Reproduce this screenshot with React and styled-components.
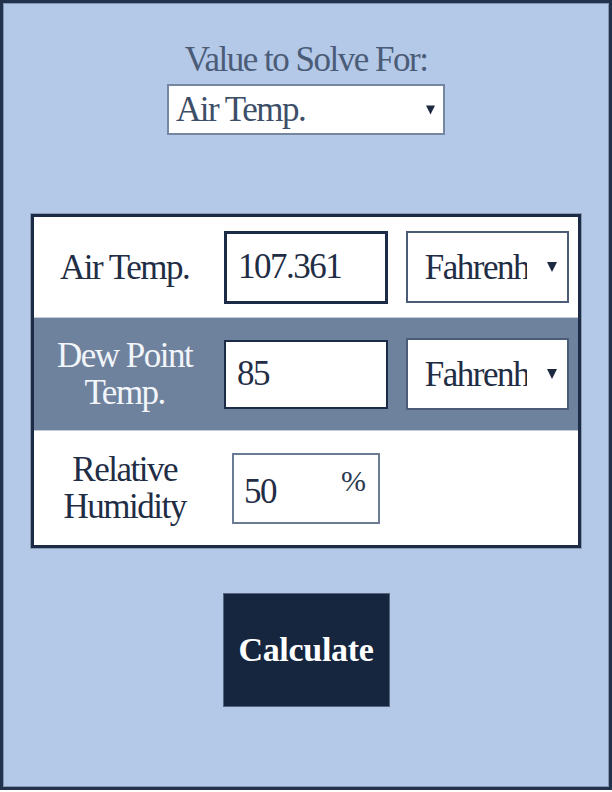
import React from 'react'
import styled, { createGlobalStyle } from 'styled-components'

const serif = `'Liberation Serif', LiberationSerif, 'Liberation Serif Regular', Georgia, 'Times New Roman', Tinos, 'DejaVu Serif', 'Noto Serif', FreeSerif, 'Nimbus Roman', 'Nimbus Roman No9 L', 'Bitstream Vera Serif', Times, serif`

const GlobalStyle = createGlobalStyle`
  body {
    margin: 0;
    font-family: ${serif};
  }
`

const Frame = styled.div`
  width: 612px;
  height: 790px;
  box-sizing: border-box;
  border: 3px solid #22324c;
  box-shadow: inset 0 0 0 1px #8395b0;
  background: #b4c8e8;
  padding-top: 37px;
  display: flex;
  flex-direction: column;
  align-items: center;
  font-family: ${serif};
`

const Title = styled.div`
  font-size: 35px;
  line-height: 40px;
  letter-spacing: -1.5px;
  color: #4b5c77;
`

const SelectWrap = styled.div`
  position: relative;
  width: ${p => p.$w}px;
  height: ${p => p.$h}px;
  margin-top: ${p => p.$mt || 0}px;
`

const Select = styled.select`
  appearance: none;
  width: 100%;
  height: 100%;
  box-sizing: border-box;
  margin: 0;
  border: 2px solid ${p => p.$border};
  border-radius: 0;
  background: #fff;
  font-family: ${serif};
  font-size: 35px;
  letter-spacing: -1.5px;
  color: ${p => p.$color};
  padding: 0 ${p => p.$pr}px 0 ${p => p.$pl}px;
  outline: none;
`

const Arrow = styled.svg`
  position: absolute;
  right: ${p => p.$r}px;
  top: 50%;
  transform: translateY(-50%);
  pointer-events: none;
`

const Table = styled.div`
  width: 550px;
  box-sizing: border-box;
  margin-top: 79px;
  border: 3px solid #1c2c47;
  box-shadow: 0 0 0 1px #8a9bb4;
  background: #fff;
`

const Row = styled.div`
  display: grid;
  grid-template-columns: repeat(3, 1fr);
  box-sizing: border-box;
  height: ${p => p.$h}px;
  background: ${p => (p.$shaded ? '#6f829d' : '#fff')};
  border-top: ${p => (p.$first ? 'none' : '1px solid #c3ccd9')};
`

const Label = styled.div`
  display: flex;
  align-items: center;
  justify-content: center;
  text-align: center;
  font-size: 35px;
  line-height: 37px;
  letter-spacing: -1.5px;
  color: ${p => (p.$light ? '#f2f5fa' : '#1f2d45')};
`

const Cell = styled.div`
  display: flex;
  align-items: center;
  justify-content: center;
`

const NumberInput = styled.input`
  width: ${p => p.$w}px;
  height: ${p => p.$h}px;
  box-sizing: border-box;
  margin: 0;
  border: ${p => p.$bw}px solid #1c2c46;
  background: #fff;
  font-family: ${serif};
  font-size: 35px;
  letter-spacing: -1.5px;
  color: #1f2d45;
  padding: 0 8px 0 11px;
  outline: none;
`

const PercentBox = styled.div`
  width: 148px;
  height: 71px;
  box-sizing: border-box;
  border: 2px solid #6b7b94;
  display: flex;
  align-items: center;
  padding: 0 12px 0 10px;
  background: #fff;
`

const PercentInput = styled.input`
  flex: 1;
  min-width: 0;
  border: none;
  outline: none;
  margin: 0;
  padding: 8px 0 0 0;
  font-family: ${serif};
  font-size: 35px;
  letter-spacing: -1.5px;
  color: #1f2d45;
  background: transparent;
`

const Suffix = styled.span`
  font-size: 30px;
  color: #2a3850;
  margin-top: -14px;
`

const CalcButton = styled.button`
  margin-top: 45px;
  width: 167px;
  height: 114px;
  background: #16263f;
  border: 1px solid #56667f;
  color: #fff;
  font-family: ${serif};
  font-weight: bold;
  font-size: 34px;
  letter-spacing: -0.3px;
  cursor: pointer;
`

const DownArrow = ({ r, w = 10, h = 12 }) => (
  <Arrow $r={r} width={w} height={h} viewBox="0 0 10 12">
    <polygon points="0,1 10,1 5,11" fill="#1c2940" />
  </Arrow>
)

const UnitSelect = () => (
  <SelectWrap $w={163} $h={72}>
    <Select $border="#4c5c76" $color="#1f2d45" $pl={17} $pr={40} defaultValue="f">
      <option value="f">Fahrenheit</option>
      <option value="c">Celsius</option>
    </Select>
    <DownArrow r={12} />
  </SelectWrap>
)

export default function App() {
  return (
    <>
      <GlobalStyle />
      <Frame>
        <Title>Value to Solve For:</Title>
        <SelectWrap $w={278} $h={51} $mt={4}>
          <Select $border="#7586a0" $color="#3d4e68" $pl={7} $pr={30} defaultValue="air">
            <option value="air">Air Temp.</option>
            <option value="dew">Dew Point Temp.</option>
            <option value="rh">Relative Humidity</option>
          </Select>
          <DownArrow r={10} w={9} h={11} />
        </SelectWrap>

        <Table>
          <Row $h={100} $first>
            <Label>Air Temp.</Label>
            <Cell>
              <NumberInput $w={164} $h={73} $bw={3} defaultValue="107.361" />
            </Cell>
            <Cell>
              <UnitSelect />
            </Cell>
          </Row>
          <Row $h={113} $shaded>
            <Label $light>Dew Point<br />Temp.</Label>
            <Cell>
              <NumberInput $w={164} $h={69} $bw={2} defaultValue="85" />
            </Cell>
            <Cell>
              <UnitSelect />
            </Cell>
          </Row>
          <Row $h={115}>
            <Label>Relative<br />Humidity</Label>
            <Cell>
              <PercentBox>
                <PercentInput defaultValue="50" />
                <Suffix>%</Suffix>
              </PercentBox>
            </Cell>
            <Cell />
          </Row>
        </Table>

        <CalcButton>Calculate</CalcButton>
      </Frame>
    </>
  )
}
